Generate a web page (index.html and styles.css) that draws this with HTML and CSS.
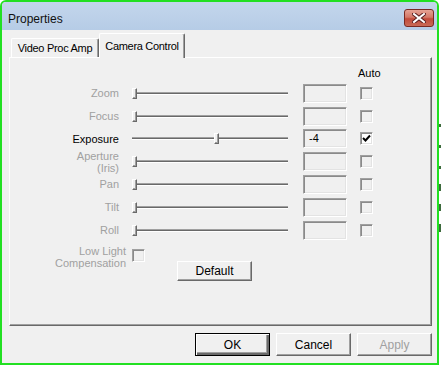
FILE: index.html
```html
<!DOCTYPE html>
<html lang="en">
<head>
  <meta charset="UTF-8" />
  <title>Properties</title>
  <link rel="stylesheet" href="styles.css">
</head>
<body>
  <div class="window">
    <div class="titlebar">
      <span class="title">Properties</span>
      <button class="close" title="Close">
        <svg width="14" height="10" viewBox="0 0 14 10">
          <path d="M2 1 L12 9 M12 1 L2 9" stroke="#5a2020" stroke-width="4" stroke-linecap="square"/>
          <path d="M2 1 L12 9 M12 1 L2 9" stroke="#fff" stroke-width="2" stroke-linecap="square"/>
        </svg>
      </button>
    </div>

    <div class="client">
      <div class="tabs">
        <div class="tab">Video Proc Amp</div>
        <div class="tab selected">Camera Control</div>
      </div>

      <div class="panel">
        <div class="grid">
          <div class="auto-head">Auto</div>

          <div class="label">Zoom</div>
          <div class="slider"><div class="track"></div><div class="thumb" style="left:1px"></div></div>
          <div class="edit"></div>
          <div class="check"></div>

          <div class="label">Focus</div>
          <div class="slider"><div class="track"></div><div class="thumb" style="left:1px"></div></div>
          <div class="edit"></div>
          <div class="check"></div>

          <div class="label on">Exposure</div>
          <div class="slider"><div class="track"></div><div class="thumb" style="left:83px"></div></div>
          <div class="edit on">-4</div>
          <div class="check on">
            <svg width="9" height="9" viewBox="0 0 9 9"><path d="M1 4 L3.5 6.5 L8 1.5" stroke="#000" stroke-width="2" fill="none"/></svg>
          </div>

          <div class="label">Aperture<br>(Iris)</div>
          <div class="slider"><div class="track"></div><div class="thumb" style="left:1px"></div></div>
          <div class="edit"></div>
          <div class="check"></div>

          <div class="label">Pan</div>
          <div class="slider"><div class="track"></div><div class="thumb" style="left:1px"></div></div>
          <div class="edit"></div>
          <div class="check"></div>

          <div class="label">Tilt</div>
          <div class="slider"><div class="track"></div><div class="thumb" style="left:1px"></div></div>
          <div class="edit"></div>
          <div class="check"></div>

          <div class="label">Roll</div>
          <div class="slider"><div class="track"></div><div class="thumb" style="left:1px"></div></div>
          <div class="edit"></div>
          <div class="check"></div>

          <div class="label lowlight">Low Light<br>Compensation</div>
          <div class="lowlight-cell">
            <div class="check"></div>
            <button class="btn default-btn">Default</button>
          </div>
        </div>
      </div>

      <div class="buttons">
        <button class="btn ok">OK</button>
        <button class="btn">Cancel</button>
        <button class="btn" disabled>Apply</button>
      </div>
    </div>
  </div>
  <div class="ticks"></div>
</body>
</html>
```

FILE: styles.css
```css
html, body { margin: 0; padding: 0; }
body {
  background: #fff;
  display: flex;
  width: 441px; height: 365px;
  overflow: hidden;
  font-family: "Liberation Sans", Arial, sans-serif;
  font-size: 11px;
  color: #000;
}

.window {
  box-sizing: border-box;
  width: 439px; height: 365px;
  border: 2px solid #22e022;
  border-radius: 6px 6px 0 0;
  background: #f0f0f0;
  display: flex; flex-direction: column;
}

.ticks {
  width: 2px; height: 365px;
  background: linear-gradient(to bottom,
    transparent 124px, #3d6b3d 124px, #3d6b3d 127px, transparent 127px,
    transparent 145px, #3d6b3d 145px, #3d6b3d 148px, transparent 148px,
    transparent 166px, #3d6b3d 166px, #3d6b3d 169px, transparent 169px,
    transparent 184px, #3d6b3d 184px, #3d6b3d 191px, transparent 191px,
    transparent 204px, #3d6b3d 204px, #3d6b3d 211px, transparent 211px,
    transparent 224px, #3d6b3d 224px, #3d6b3d 232px, transparent 232px);
}

/* title bar */
.titlebar {
  height: 28px;
  display: flex; align-items: center; justify-content: space-between;
  padding: 0 3px 0 6px;
  background: linear-gradient(#c3d6ec, #b6cce6);
  border-radius: 4px 4px 0 0;
}
.title { font-size: 12px; color: #111; margin-top: 5px; }
.close {
  width: 30px; height: 18px;
  margin-top: 4px;
  border: 1px solid #7a2a22;
  border-radius: 3px;
  background: linear-gradient(#e6a294, #d47868 45%, #c24a3a 55%, #c96a56);
  display: flex; align-items: center; justify-content: center;
  padding: 0;
}

/* client area */
.client {
  flex: 1;
  padding: 3px 5px 0 7px;
  display: flex; flex-direction: column;
}

.tabs {
  display: flex; align-items: flex-end;
  padding-left: 2px;
  height: 24px;
}
.tab {
  height: 19px;
  box-sizing: border-box;
  line-height: 18px;
  letter-spacing: -0.3px;
  white-space: nowrap;
  border: 1px solid #fff;
  border-bottom: none;
  border-right-color: #696969;
  box-shadow: inset -1px 0 #a0a0a0;
  border-radius: 2px 2px 0 0;
  background: #f0f0f0;
  width: 88px;
  text-align: center;
}
.tab.selected {
  height: 25px;
  width: 86px;
  line-height: 24px;
  position: relative;
  margin-bottom: -1px;
  z-index: 1;
}

.panel {
  box-sizing: border-box;
  height: 269px;
  border: 1px solid;
  border-color: #fff #696969 #696969 #fff;
  box-shadow: inset -1px -1px #a0a0a0;
  padding: 8px 0 0 10px;
}

.grid {
  display: grid;
  grid-template-columns: 111px 172px 57px 13px;
  grid-template-rows: 14px repeat(7, 19px) 40px;
  row-gap: 3.8px;
}
.auto-head { grid-column: 4; margin-left: -2px; line-height: 14px; white-space: nowrap; }

.label {
  grid-column: 1;
  align-self: center;
  text-align: right;
  padding-right: 12px;
  color: #a0a0a0;
  line-height: 12px;
}
.label.on { color: #000; }
.label.lowlight { padding-right: 5px; align-self: start; margin-top: 2px; }

.slider {
  position: relative;
  width: 156px;
  display: flex; align-items: center;
  padding-left: 1px;
}
.track {
  flex: 1;
  height: 1px;
  border-top: 1px solid #a0a0a0;
  background: #696969;
  border-bottom: 1px solid #fff;
}
.thumb {
  position: absolute;
  top: 4px;
  width: 3px; height: 9px;
  background: #f0f0f0;
  border: 1px solid;
  border-color: #fff #696969 #696969 #fff;
  box-shadow: inset -1px -1px #a0a0a0;
}

.edit {
  box-sizing: border-box;
  width: 44px; height: 19px;
  border: 1px solid;
  border-color: #a0a0a0 #fff #fff #a0a0a0;
  box-shadow: inset 1px 1px #8a8a8a, inset -1px -1px #e3e3e3;
  padding: 2px 0 0 5px;
  line-height: 13px;
}

.check {
  box-sizing: border-box;
  width: 13px; height: 13px;
  align-self: center;
  border: 1px solid;
  border-color: #a0a0a0 #fff #fff #a0a0a0;
  box-shadow: inset 1px 1px #8a8a8a, inset -1px -1px #e3e3e3;
  display: flex; align-items: center; justify-content: center;
}
.check.on { background: #fff; }

.lowlight-cell {
  grid-column: 2;
  display: flex; flex-direction: column; align-items: flex-start;
}
.lowlight-cell .check { align-self: flex-start; margin-top: 6px; margin-left: 1px; }

.btn {
  box-sizing: border-box;
  width: 75px; height: 23px;
  font-family: inherit;
  font-size: 12px;
  color: #000;
  background: #f0f0f0;
  border: 1px solid;
  border-color: #fff #696969 #696969 #fff;
  box-shadow: inset -1px -1px #a0a0a0;
  padding: 0;
}
.btn:disabled { color: #a0a0a0; }
.btn.ok {
  border: 1px solid #000;
  box-shadow: inset 1px 1px #fff, inset -2px -2px #696969, inset -3px -3px #a0a0a0;
}
.default-btn { height: 20px; margin: -1px 0 0 46px; }

.buttons {
  display: flex; justify-content: flex-end; gap: 6px;
  margin-top: 7px;
}
```
